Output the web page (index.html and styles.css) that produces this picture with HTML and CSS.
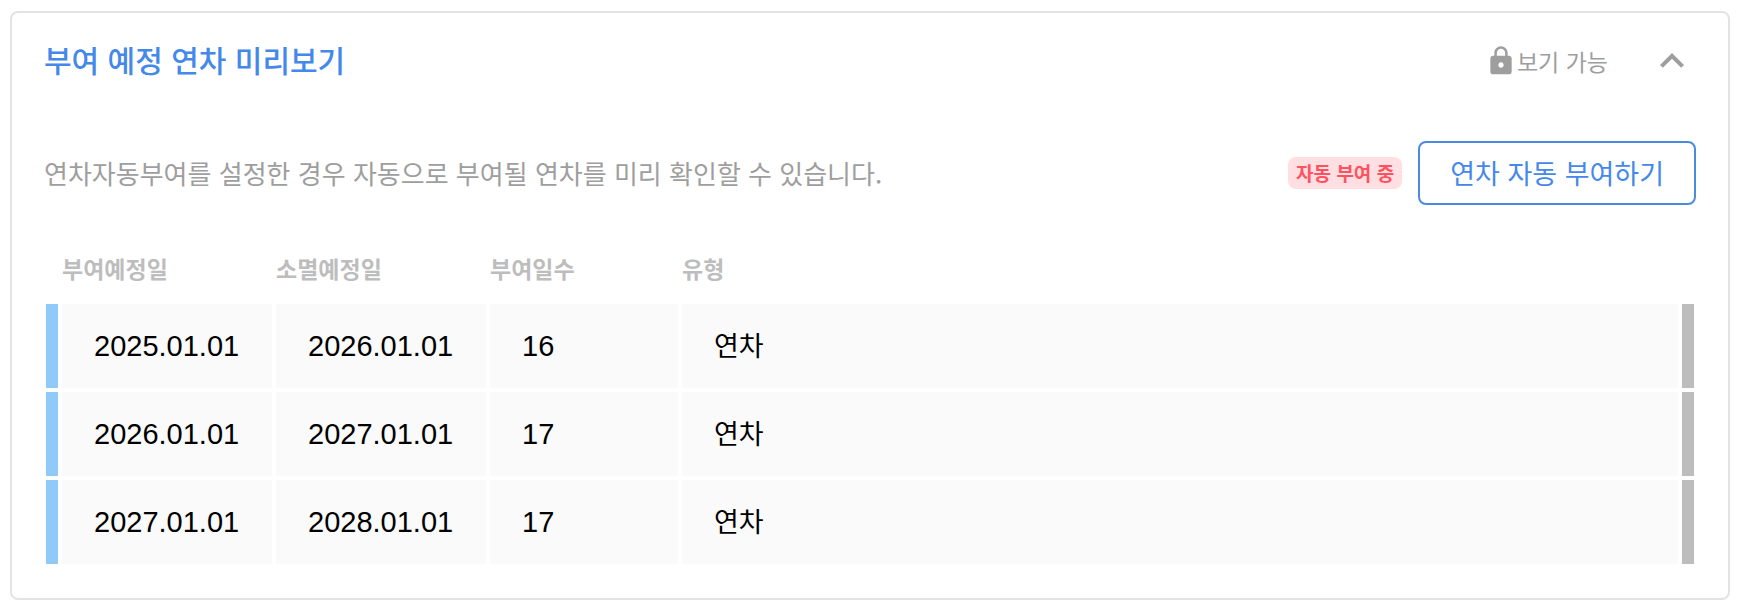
FILE: index.html
```html
<!DOCTYPE html>
<html lang="ko">
<head>
    <meta charset="UTF-8">
    <meta name="viewport" content="width=device-width, initial-scale=1.0">
    <title>부여 예정 연차 미리보기</title>
    <link rel="stylesheet" href="styles.css">
</head>
<body>
    <section class="card">
        <header class="card-header">
            <h1 class="card-title">부여 예정 연차 미리보기</h1>
            <div class="permission">
                <svg class="lock-icon" viewBox="0 0 24 24" aria-hidden="true">
                    <path d="M18 8h-1V6c0-2.76-2.24-5-5-5S7 3.24 7 6v2H6c-1.1 0-2 .9-2 2v10c0 1.1.9 2 2 2h12c1.1 0 2-.9 2-2V10c0-1.1-.9-2-2-2zm-6 9c-1.1 0-2-.9-2-2s.9-2 2-2 2 .9 2 2-.9 2-2 2zm3.1-9H8.9V6c0-1.71 1.39-3.1 3.1-3.1 1.71 0 3.1 1.39 3.1 3.1v2z"/>
                </svg>
                <span>보기 가능</span>
            </div>
            <button type="button" class="toggle" aria-label="접기" aria-expanded="true">
                <svg class="toggle-icon" viewBox="0 0 24 24" aria-hidden="true">
                    <path d="M12 8l-6 6 1.41 1.41L12 10.83l4.59 4.58L18 14z"/>
                </svg>
            </button>
        </header>

        <div class="card-body">
            <div class="intro">
                <p class="description">연차자동부여를 설정한 경우 자동으로 부여될 연차를 미리 확인할 수 있습니다.</p>
                <span class="badge">자동 부여 중</span>
                <button type="button" class="grant-button">연차 자동 부여하기</button>
            </div>

            <table class="leave-table">
                <thead>
                    <tr>
                        <td class="bar"></td>
                        <th class="col-date" scope="col">부여예정일</th>
                        <th class="col-date" scope="col">소멸예정일</th>
                        <th class="col-days" scope="col">부여일수</th>
                        <th scope="col">유형</th>
                        <td class="bar"></td>
                    </tr>
                </thead>
                <tbody>
                    <tr>
                        <td class="bar bar-start"></td>
                        <td>2025.01.01</td>
                        <td>2026.01.01</td>
                        <td>16</td>
                        <td class="type">연차</td>
                        <td class="bar bar-end"></td>
                    </tr>
                    <tr>
                        <td class="bar bar-start"></td>
                        <td>2026.01.01</td>
                        <td>2027.01.01</td>
                        <td>17</td>
                        <td class="type">연차</td>
                        <td class="bar bar-end"></td>
                    </tr>
                    <tr>
                        <td class="bar bar-start"></td>
                        <td>2027.01.01</td>
                        <td>2028.01.01</td>
                        <td>17</td>
                        <td class="type">연차</td>
                        <td class="bar bar-end"></td>
                    </tr>
                </tbody>
            </table>
        </div>
    </section>
</body>
</html>
```
FILE: styles.css
```css
* {
    box-sizing: border-box;
}
body {
    margin: 11px 10px;
    background-color: #fff;
    color: #000;
    font-family: "Noto Sans CJK KR", sans-serif;
}
button {
    font-family: inherit;
    cursor: pointer;
}
.card {
    border: 2px solid #e3e3e3;
    border-radius: 8px;
}
.card-header {
    display: flex;
    align-items: center;
    padding: 24px 32px;
}
.card-title {
    flex: 1;
    margin: 0;
    padding-bottom: 4px;
    color: #4488ea;
    font-size: 30px;
    font-weight: 500;
    line-height: 44px;
}
.permission {
    display: flex;
    align-items: center;
    margin-right: 40px;
    color: #9e9e9e;
    font-size: 23px;
    line-height: 32px;
}
.lock-icon {
    width: 32px;
    height: 32px;
    fill: #9e9e9e;
}
.toggle {
    display: flex;
    padding: 0;
    border: none;
    background: none;
}
.toggle-icon {
    width: 48px;
    height: 48px;
    fill: #9e9e9e;
}
.card-body {
    padding: 32px 32px 30px;
}
.intro {
    display: flex;
    align-items: center;
    gap: 16px;
}
.description {
    flex: 1;
    margin: 0;
    color: #9e9e9e;
    font-size: 26px;
    line-height: 40px;
}
.badge {
    padding: 0 8px;
    border-radius: 8px;
    background-color: #ffdfe1;
    color: #ff5260;
    font-size: 19px;
    font-weight: 700;
    line-height: 32px;
}
.grant-button {
    padding: 0 30px;
    border: 2px solid #4a8be0;
    border-radius: 8px;
    background-color: #fff;
    color: #4488ea;
    font-size: 27px;
    line-height: 60px;
}
/* the outer border-spacing hangs 2px past the content on each side */
.leave-table {
    width: calc(100% + 4px);
    margin: 27px -2px 0;
    border-spacing: 4px;
    table-layout: fixed;
}
.leave-table th {
    height: 64px;
    padding: 0;
    color: #bdbdbd;
    font-size: 23px;
    font-weight: 700;
    text-align: left;
}
.leave-table tbody td {
    height: 84px;
    padding: 0 32px;
    background-color: #fafafa;
    font-family: "Liberation Sans", "Noto Sans CJK KR", sans-serif;
    font-size: 29px;
}
.leave-table tbody .type {
    padding-bottom: 4px;
    font-size: 27px;
}
.leave-table .bar {
    width: 12px;
    padding: 0;
}
.leave-table tbody .bar-start {
    background-color: #90caf9;
}
.leave-table tbody .bar-end {
    background-color: #bdbdbd;
}
.col-date {
    width: 210px;
}
.col-days {
    width: 188px;
}
```
